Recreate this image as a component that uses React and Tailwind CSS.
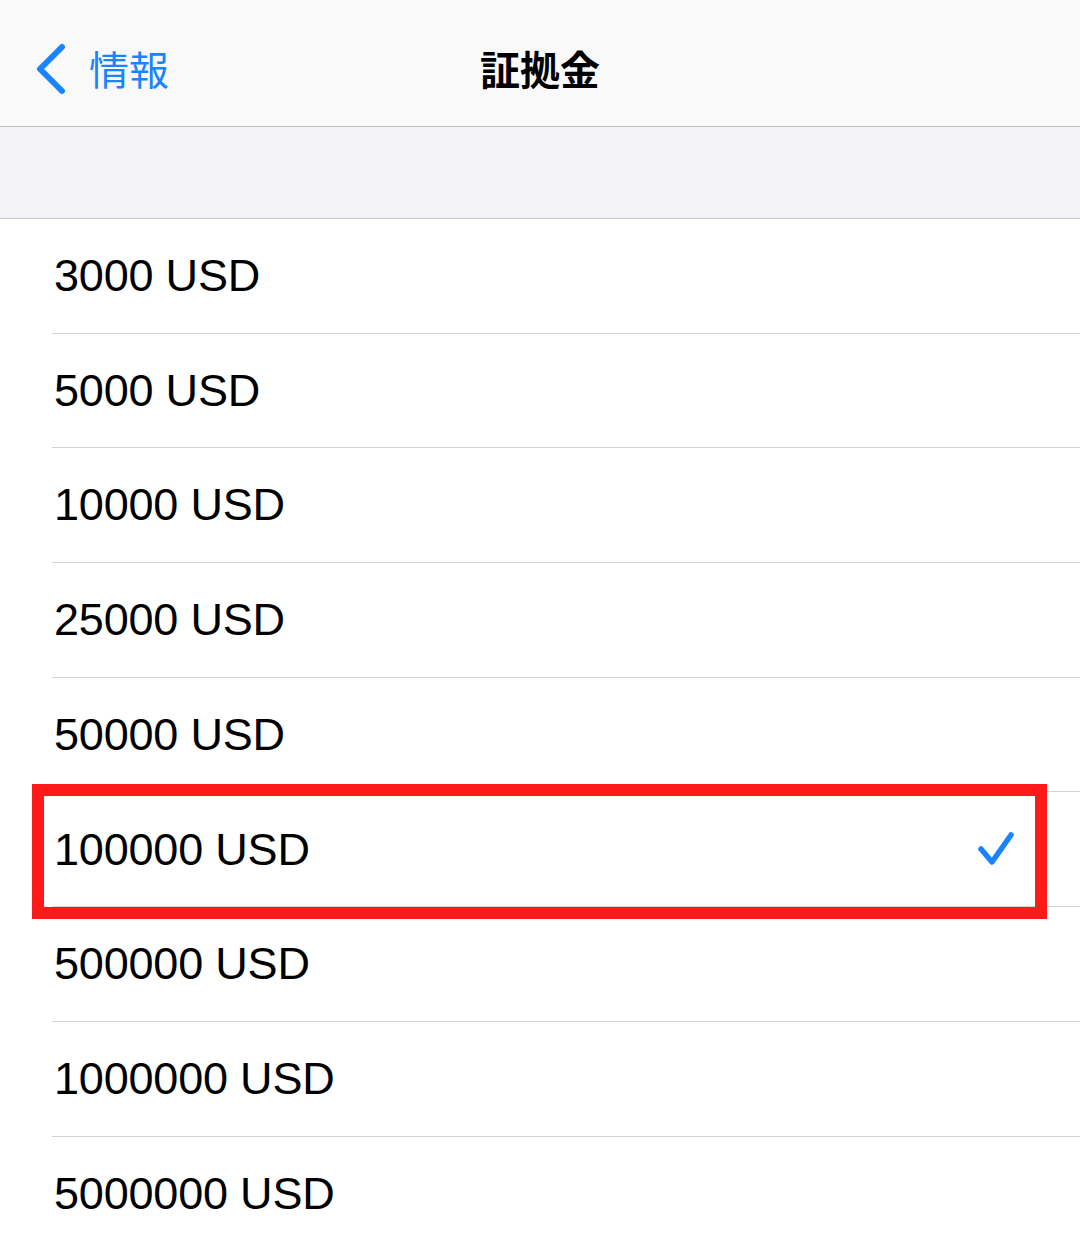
import React from 'react'

const amounts = ['3000', '5000', '10000', '25000', '50000', '100000', '500000', '1000000', '5000000']
const selected = '100000'

const font = { fontFamily: '"Liberation Sans", "Noto Sans CJK JP", sans-serif' }

const App = () => {
  return (
    <div className='w-[1080px] h-[1248px] overflow-hidden bg-white' style={font}>
      {/* nav bar */}
      <div className='relative h-[127px] bg-[#f9f9f9] border-b border-[#c4c4c6] flex items-center pt-[12px]'>
        <div className='flex items-center pl-[33px] gap-[20px] text-[#1a84ff]'>
          <svg width='36' height='52' viewBox='0 0 36 52'>
            <path d='M29 4 L7 26 L29 48' fill='none' stroke='#1a84ff' strokeWidth='6' strokeLinecap='round' strokeLinejoin='round' />
          </svg>
          <span className='text-[40px] leading-none mt-[-2px]' style={{ fontFamily: '"Noto Sans CJK JP", sans-serif' }}>情報</span>
        </div>
        <h1
          className='absolute inset-x-0 text-center text-[40px] font-bold leading-none text-black mt-[-2px] pointer-events-none'
          style={{ fontFamily: '"Noto Sans CJK JP", sans-serif' }}
        >
          証拠金
        </h1>
      </div>

      {/* group header band */}
      <div className='h-[92px] bg-[#f2f2f7] border-b border-[#c8c8cc]' />

      {/* options */}
      <ul className='bg-white'>
        {amounts.map((a, i) => (
          <li key={a} className='relative pl-[52px]'>
            <div className={`h-[114.7px] flex items-center pr-[64px] ${i < amounts.length - 1 ? 'border-b border-[#d1d1d6]' : ''}`}>
              <span className='flex-1 text-[45px] text-black pl-[2px] tracking-[-0.2px]'>{a} USD</span>
              {a === selected && (
                <svg width='40' height='40' viewBox='0 0 40 40'>
                  <path d='M5 20 L16 33 L35 6' fill='none' stroke='#1a84ff' strokeWidth='5.5' strokeLinecap='round' strokeLinejoin='round' />
                </svg>
              )}
            </div>
            {a === selected && (
              <div className='absolute left-[32px] top-[-8px] w-[1015px] h-[135px] border-[12px] border-[#ff1a1a] pointer-events-none' />
            )}
          </li>
        ))}
      </ul>
    </div>
  )
}

export default App
